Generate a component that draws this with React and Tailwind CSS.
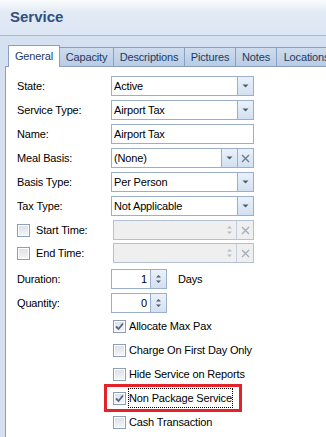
import React from 'react';

const TABS = [
  { name: 'General', w: 'w-[52px]' },
  { name: 'Capacity', w: 'w-[54px]' },
  { name: 'Descriptions', w: 'w-[71px]' },
  { name: 'Pictures', w: 'w-[51px]' },
  { name: 'Notes', w: 'w-[41px]' },
  { name: 'Locations', w: 'w-[60px]' },
];

function DropArrow() {
  return (
    <svg width="7" height="4" viewBox="0 0 7 4">
      <path d="M0.5 0.5H6.5L3.5 3.5Z" fill="#4e5d71" />
    </svg>
  );
}

function XIcon({ color = '#6d7c92' }) {
  return (
    <svg width="9" height="9" viewBox="0 0 9 9">
      <path d="M1 1L8 8M8 1L1 8" stroke={color} strokeWidth="1.4" />
    </svg>
  );
}

function SpinArrows({ color = '#4e5d71' }) {
  return (
    <svg width="7" height="12" viewBox="0 0 7 12">
      <path d="M1 4.5H6L3.5 2Z" fill={color} />
      <path d="M1 7.5H6L3.5 10Z" fill={color} />
    </svg>
  );
}

function Check({ checked }) {
  return (
    <div className="w-[13px] h-[13px] border border-[#8e9db4] bg-[linear-gradient(to_bottom,#dcdfe4,#f5f6f8)] shadow-[inset_0_0_0_1px_#ffffff] flex items-center justify-center shrink-0">
      {checked && (
        <svg width="11" height="11" viewBox="0 0 11 11">
          <path d="M2 5.5L4.5 8L9 2.5" stroke="#4b6891" strokeWidth="1.8" fill="none" />
        </svg>
      )}
    </div>
  );
}

function Row({ label, children, className = '' }) {
  return (
    <div className={`flex items-center h-[20px] ${className}`}>
      <div className="w-[94px] flex items-center">{label}</div>
      {children}
    </div>
  );
}

function Combo({ value, clear }) {
  return (
    <div className="w-[143px] h-[20px] border border-[#9cafca] bg-white flex">
      <div className="flex-1 pl-[2px] flex items-center">{value}</div>
      <div className="w-[16px] border-l border-[#9cafca] bg-[linear-gradient(to_bottom,#eaf1fa,#d3e0f1)] flex items-center justify-center">
        <DropArrow />
      </div>
      {clear && (
        <div className="w-[16px] border-l border-[#9cafca] bg-[linear-gradient(to_bottom,#eaf1fa,#d3e0f1)] flex items-center justify-center">
          <XIcon />
        </div>
      )}
    </div>
  );
}

function TimeBox() {
  return (
    <div className="ml-[2px] w-[141px] h-[20px] border border-[#b3c1d5] bg-[#efefef] flex">
      <div className="flex-1" />
      <div className="w-[14px] flex items-center justify-center">
        <SpinArrows color="#b6bdc7" />
      </div>
      <div className="w-[17px] border-l border-[#c3cddb] flex items-center justify-center">
        <XIcon color="#a3afbf" />
      </div>
    </div>
  );
}

function Spinner({ value }) {
  return (
    <div className="w-[56px] h-[20px] border border-[#9cafca] bg-white flex">
      <div className="flex-1 pr-[3px] flex items-center justify-end">{value}</div>
      <div className="w-[16px] border-l border-[#9cafca] bg-[linear-gradient(to_bottom,#eaf1fa,#d3e0f1)] flex items-center justify-center">
        <SpinArrows />
      </div>
    </div>
  );
}

function CheckRow({ label, checked, focus, marked }) {
  return (
    <div className="relative h-[24px] flex items-center pl-[96px]">
      <Check checked={checked} />
      {focus ? (
        <span className="ml-[2px] h-[20px] border border-dotted border-black flex items-center">{label}</span>
      ) : (
        <span className="ml-[3px]">{label}</span>
      )}
      {marked && (
        <div className="absolute left-[87px] top-[-2px] w-[138px] h-[28px] border-[3px] border-[#e5222a]" />
      )}
    </div>
  );
}

export default function App() {
  return (
    <div className="w-[326px] h-[437px] overflow-hidden flex flex-col font-['Liberation_Sans',Arial,sans-serif] text-[11px] tracking-[-0.15px] text-black">
      <div className="h-[36px] shrink-0 border-b border-[#a5b8d2] bg-[linear-gradient(to_bottom,#fafcfe_0%,#e2eaf5_35%,#dce6f3_100%)] flex items-center pl-[10px]">
        <span className="text-[15px] font-bold tracking-normal text-[#30507f]">Service</span>
      </div>

      <div className="flex-1 flex flex-col bg-[#d5e1f1] pt-[9px] pl-[5px]">
        <div className="relative z-10 flex items-end h-[22px] pl-[3px]">
          {TABS.map((t, i) =>
            i === 0 ? (
              <div
                key={t.name}
                className={`${t.w} shrink-0 h-[22px] bg-white border-l border-t border-r border-[#8ba0c0] flex items-center justify-center text-[#1e3a5f] pb-[1px]`}
              >
                {t.name}
              </div>
            ) : (
              <div
                key={t.name}
                className={`${t.w} shrink-0 h-[19px] mb-[1px] bg-[linear-gradient(to_bottom,#cedcee,#b9cce5)] border-t border-r border-[#8ba0c0] flex items-center justify-center text-[#1e3a5f]`}
              >
                {t.name}
              </div>
            )
          )}
        </div>

        <div className="-mt-px flex-1 bg-white border-l border-t border-[#8ba0c0] pl-[11px] pt-[9px] flex flex-col">
          <Row label="State:">
            <Combo value="Active" />
          </Row>
          <Row label="Service Type:" className="mt-[4px]">
            <Combo value="Airport Tax" />
          </Row>
          <Row label="Name:" className="mt-[4px]">
            <div className="w-[143px] h-[20px] border border-[#9cafca] bg-white pl-[2px] flex items-center">Airport Tax</div>
          </Row>
          <Row label="Meal Basis:" className="mt-[4px]">
            <Combo value="(None)" clear />
          </Row>
          <Row label="Basis Type:" className="mt-[4px]">
            <Combo value="Per Person" />
          </Row>
          <Row label="Tax Type:" className="mt-[4px]">
            <Combo value="Not Applicable" />
          </Row>
          <Row
            className="mt-[4px]"
            label={
              <>
                <Check />
                <span className="ml-[6px]">Start Time:</span>
              </>
            }
          >
            <TimeBox />
          </Row>
          <Row
            className="mt-[3px]"
            label={
              <>
                <Check />
                <span className="ml-[6px]">End Time:</span>
              </>
            }
          >
            <TimeBox />
          </Row>
          <Row label="Duration:" className="mt-[6px]">
            <Spinner value="1" />
            <span className="ml-[11px]">Days</span>
          </Row>
          <Row label="Quantity:" className="mt-[4px]">
            <Spinner value="0" />
          </Row>

          <div className="mt-[1px] flex flex-col">
            <CheckRow label="Allocate Max Pax" checked />
            <CheckRow label="Charge On First Day Only" />
            <CheckRow label="Hide Service on Reports" />
            <CheckRow label="Non Package Service" checked focus marked />
            <CheckRow label="Cash Transaction" />
          </div>
        </div>
      </div>
    </div>
  );
}
